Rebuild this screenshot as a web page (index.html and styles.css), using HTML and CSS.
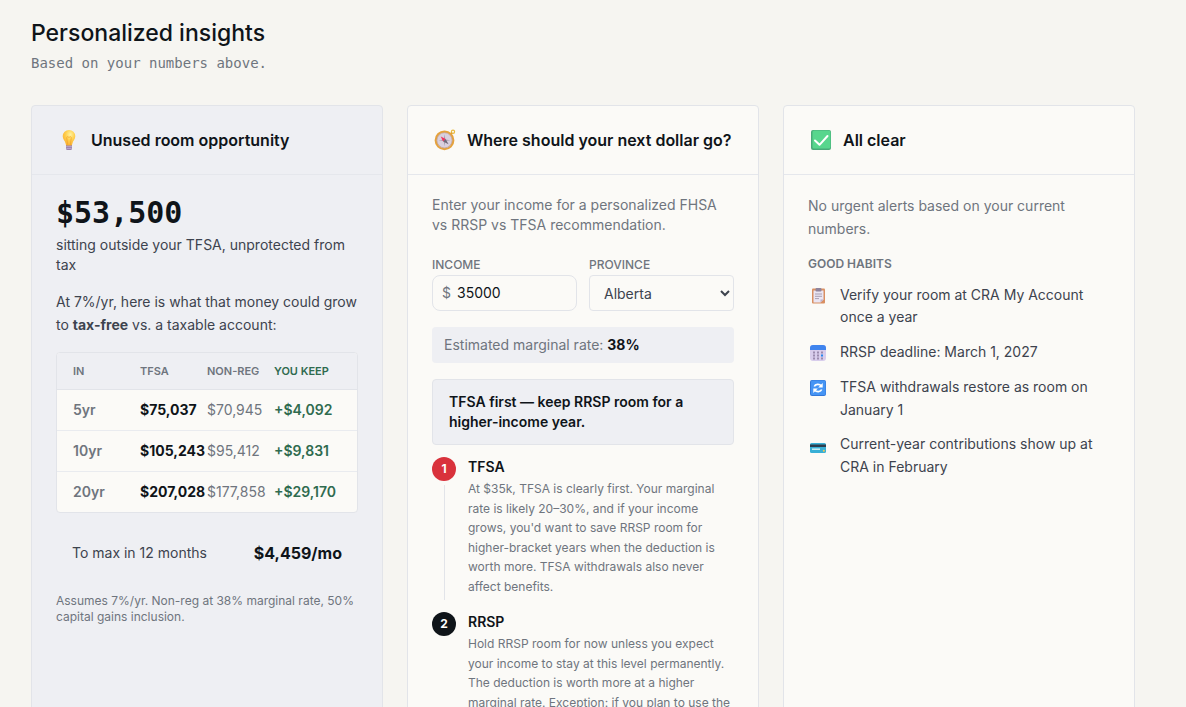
FILE: index.html
```html
<!DOCTYPE html>
<html lang="en">
<head>
    <meta charset="UTF-8">
    <meta name="viewport" content="width=device-width, initial-scale=1.0">
    <title>Personalized insights</title>
    <link rel="stylesheet" href="styles.css">
</head>
<body>
    <main class="insights">
        <header class="insights-header">
            <h1>Personalized insights</h1>
            <p>Based on your numbers above.</p>
        </header>

        <div class="cards">
            <!-- Unused room -->
            <section class="card card-tinted">
                <div class="card-header">
                    <svg class="card-icon" viewBox="0 0 24 24" aria-hidden="true">
                        <defs>
                            <radialGradient id="bulb" cx="0.6" cy="0.3" r="0.7">
                                <stop offset="0" stop-color="#fff3a0"/>
                                <stop offset="0.5" stop-color="#ffd04f"/>
                                <stop offset="1" stop-color="#f9b233"/>
                            </radialGradient>
                        </defs>
                        <path d="M10 17h6v3.500a1.500 1.500 0 0 1-1.500 1.500h-3a1.500 1.500 0 0 1-1.500-1.500z" fill="#9a82ad"/>
                        <path d="M10 18.700h6M10.300 20.500h5.400" stroke="#c9b8d6" stroke-width="0.700"/>
                        <path d="M13 2a6.300 6.300 0 0 0-6.300 6.300c0 3.200 2.300 4.400 2.900 7.200.2 1.200.5 1.900 1.400 1.900h4c.9 0 1.200-.7 1.400-1.900.6-2.800 2.900-4 2.900-7.200A6.300 6.300 0 0 0 13 2z" fill="url(#bulb)"/>
                        <path d="M11.700 17l-.8-6c-.7-2.500 1-3 2.100-1.500 1.100-1.500 2.800-1 2.100 1.500l-.8 6" fill="none" stroke="#f3a52d" stroke-width="0.800"/>
                    </svg>
                    <h2>Unused room opportunity</h2>
                </div>
                <div class="card-body">
                    <div class="amount">$53,500</div>
                    <p class="amount-note">sitting outside your TFSA, unprotected from tax</p>
                    <p class="growth-note">At 7%/yr, here is what that money could grow to <strong>tax-free</strong> vs. a taxable account:</p>
                    <table class="growth">
                        <thead>
                            <tr><th>In</th><th>TFSA</th><th>Non-reg</th><th class="keep">You keep</th></tr>
                        </thead>
                        <tbody>
                            <tr><td class="years">5yr</td><td class="tfsa">$75,037</td><td>$70,945</td><td class="keep">+$4,092</td></tr>
                            <tr><td class="years">10yr</td><td class="tfsa">$105,243</td><td>$95,412</td><td class="keep">+$9,831</td></tr>
                            <tr><td class="years">20yr</td><td class="tfsa">$207,028</td><td>$177,858</td><td class="keep">+$29,170</td></tr>
                        </tbody>
                    </table>
                    <div class="monthly">
                        <span>To max in 12 months</span>
                        <strong>$4,459/mo</strong>
                    </div>
                    <p class="fine-print">Assumes 7%/yr. Non-reg at 38% marginal rate, 50% capital gains inclusion.</p>
                </div>
            </section>

            <!-- Next dollar -->
            <section class="card">
                <div class="card-header">
                    <svg class="card-icon" viewBox="0 0 24 24" aria-hidden="true">
                        <circle cx="21" cy="3.700" r="1.600" fill="none" stroke="#e9b93d" stroke-width="1.200"/>
                        <path d="M18 6.500l2-1.700" stroke="#d99a32" stroke-width="1.600"/>
                        <circle cx="12.500" cy="12.300" r="8.900" fill="#d9d0de" stroke="#e5a23d" stroke-width="2"/>
                        <circle cx="12.500" cy="12.300" r="7.600" fill="none" stroke="#b98a6a" stroke-width="0.500"/>
                        <path d="M12.500 6.300l.8 5.200 5.200.8-5.200.8-.8 5.200-.8-5.200-5.200-.8 5.200-.8z" fill="#a79dad"/>
                        <path d="M8.800 8.600l4.800 2.500-2.500 2.500z" fill="#f4305d"/>
                        <path d="M16.500 16.300l-5.400-2.700 2.500-2.500z" fill="#6f6878"/>
                    </svg>
                    <h2>Where should your next dollar go?</h2>
                </div>
                <div class="card-body">
                    <p class="intro">Enter your income for a personalized FHSA vs RRSP vs TFSA recommendation.</p>
                    <form class="fields">
                        <div class="field">
                            <label for="income">Income</label>
                            <div class="money-input">
                                <span>$</span>
                                <input type="text" id="income" inputmode="numeric" value="35000">
                            </div>
                        </div>
                        <div class="field">
                            <label for="province">Province</label>
                            <select id="province">
                                <option>Alberta</option>
                            </select>
                        </div>
                    </form>
                    <p class="rate">Estimated marginal rate: <strong>38%</strong></p>
                    <p class="verdict">TFSA first — keep RRSP room for a higher-income year.</p>
                    <ol class="steps">
                        <li class="step">
                            <div class="step-marker">
                                <span class="step-number step-first">1</span>
                                <span class="step-line"></span>
                            </div>
                            <div class="step-text">
                                <h3>TFSA</h3>
                                <p>At $35k, TFSA is clearly first. Your marginal rate is likely 20–30%, and if your income grows, you'd want to save RRSP room for higher-bracket years when the deduction is worth more. TFSA withdrawals also never affect benefits.</p>
                            </div>
                        </li>
                        <li class="step">
                            <div class="step-marker">
                                <span class="step-number">2</span>
                            </div>
                            <div class="step-text">
                                <h3>RRSP</h3>
                                <p>Hold RRSP room for now unless you expect your income to stay at this level permanently. The deduction is worth more at a higher marginal rate. Exception: if you plan to use the</p>
                            </div>
                        </li>
                    </ol>
                </div>
            </section>

            <!-- Alerts -->
            <section class="card">
                <div class="card-header">
                    <svg class="card-icon" viewBox="0 0 24 24" aria-hidden="true">
                        <rect x="3" y="2" width="20" height="20" rx="2" fill="#48aa78"/>
                        <rect x="4.500" y="2.500" width="18" height="18" rx="1.500" fill="#57d68d"/>
                        <path d="M7 12.500l4.500 4.300L19.500 8" fill="none" stroke="#fff" stroke-width="2" stroke-linecap="round" stroke-linejoin="round"/>
                    </svg>
                    <h2>All clear</h2>
                </div>
                <div class="card-body">
                    <p class="alerts">No urgent alerts based on your current numbers.</p>
                    <h3 class="habits-title">Good habits</h3>
                    <ul class="habits">
                        <li>
                            <svg viewBox="0 0 20 20" aria-hidden="true">
                                <rect x="4" y="2.500" width="13" height="15" rx="1" fill="#d98f62"/>
                                <path d="M5.500 4.500h10v9l-3 3h-7z" fill="#eae5f3"/>
                                <path d="M12.500 16.500v-3h3z" fill="#bcb0cc"/>
                                <rect x="7.500" y="2" width="6" height="3.500" rx="1" fill="#8f849c"/>
                                <path d="M7 8h7M7 10.300h7M7 12.600h4" stroke="#a89fb3" stroke-width="1"/>
                            </svg>
                            <span>Verify your room at CRA My Account once a year</span>
                        </li>
                        <li>
                            <svg viewBox="0 0 20 20" aria-hidden="true">
                                <rect x="2" y="2" width="16" height="16" rx="3" fill="#d8cdec"/>
                                <path d="M2 7V5a3 3 0 0 1 3-3h10a3 3 0 0 1 3 3v2z" fill="#3f84ee"/>
                                <path d="M5 8.500h2v2H5zM9 8.500h2v2H9zM13 8.500h2v2h-2zM5 11.500h2v2H5zM9 11.500h2v2H9zM5 14.500h2v2H5zM9 14.500h2v2H9zM13 14.500h2v2h-2z" fill="#9b8caf"/>
                                <path d="M13 11.500h2v2h-2z" fill="#2487ee"/>
                            </svg>
                            <span>RRSP deadline: March 1, 2027</span>
                        </li>
                        <li>
                            <svg viewBox="0 0 20 20" aria-hidden="true">
                                <rect x="2" y="2" width="16" height="16" rx="2" fill="#3277d8"/>
                                <rect x="3" y="2.500" width="14.500" height="14.500" rx="1.500" fill="#4594f4"/>
                                <path d="M6.300 8.500c1-2.500 5-3 7.200-.5M13.700 11.500c-1 2.500-5 3-7.200.5" fill="none" stroke="#fff" stroke-width="1.700"/>
                                <path d="M14.700 5v4.500h-4.500zM5.300 15v-4.500h4.500z" fill="#fff"/>
                            </svg>
                            <span>TFSA withdrawals restore as room on January 1</span>
                        </li>
                        <li>
                            <svg viewBox="0 0 20 20" aria-hidden="true">
                                <rect x="2" y="8" width="16" height="10" rx="1.500" fill="#38afd6"/>
                                <path d="M2 9.500h16V12H2z" fill="#2d3c4d"/>
                                <path d="M4 14.200h8" stroke="#d8f2f5" stroke-width="1.400"/>
                                <circle cx="15.800" cy="15.800" r="1" fill="#f6c94c"/>
                            </svg>
                            <span>Current-year contributions show up at CRA in February</span>
                        </li>
                    </ul>
                </div>
            </section>
        </div>
    </main>
</body>
</html>
```

FILE: styles.css
```css
* {
    box-sizing: border-box;
}
body {
    margin: 0;
    font-family: Inter, sans-serif;
    font-size: 14px;
    line-height: 20px;
    color: #3d434e;
    background: #f6f5f1;
}
h1, h2, h3, p, ul, ol {
    margin: 0;
    padding: 0;
}
ul, ol {
    list-style: none;
}
.insights {
    padding: 17px 51px 32px 31px;
}
.insights-header {
    margin-bottom: 32px;
}
.insights-header h1 {
    font-size: 23px;
    line-height: 32px;
    font-weight: 500;
    color: #0f1419;
    margin-bottom: 4px;
}
.insights-header p {
    font-family: "DejaVu Sans Mono", monospace;
    color: #6f757e;
}

/* Cards */
.cards {
    display: grid;
    grid-template-columns: repeat(3, 1fr);
    gap: 24px;
}
.card {
    background: #fbfaf7;
    border: 1px solid #e2e4e9;
    border-radius: 4px;
}
.card-tinted {
    background: #eeeff3;
}
.card-header {
    display: flex;
    align-items: center;
    gap: 11px;
    padding: 24px;
    border-bottom: 1px solid #e5e7ec;
}
.card-header h2 {
    font-size: 16px;
    line-height: 20px;
    font-weight: 600;
    color: #0f1419;
    white-space: nowrap;
}
.card-icon {
    width: 24px;
    height: 24px;
    margin: -2px 0;
    flex-shrink: 0;
}
.card-body {
    padding: 20px 24px 24px;
}

/* Unused room */
.amount {
    font-family: "DejaVu Sans Mono", monospace;
    font-size: 30px;
    line-height: 36px;
    font-weight: 700;
    color: #0f1419;
    margin-bottom: 4px;
}
.amount-note {
    margin-bottom: 16px;
}
.growth-note {
    line-height: 1.625;
    margin-bottom: 15px;
}
.growth {
    display: block;
    background: #fbfaf7;
    border: 1px solid #e2e4e9;
    border-radius: 4px;
    overflow: hidden;
}
.growth thead, .growth tbody {
    display: block;
}
.growth tr {
    display: grid;
    grid-template-columns: repeat(4, minmax(0, 1fr));
    padding: 10px 16px;
    border-bottom: 1px solid #e9ebef;
}
.growth tbody tr:last-child {
    border-bottom: none;
}
.growth thead tr {
    background: #eeeff3;
    border-color: #e2e4e9;
}
.growth th, .growth td {
    padding: 0;
    text-align: left;
    white-space: nowrap;
}
.growth th {
    font-size: 11px;
    line-height: 16px;
    font-weight: 600;
    text-transform: uppercase;
    color: #6f757e;
}
.growth td {
    color: #6f757e;
}
.growth .years {
    font-weight: 600;
}
.growth .tfsa {
    font-weight: 700;
    color: #0f1419;
}
.growth .keep {
    font-weight: 600;
    color: #2f6b4f;
}
.monthly {
    display: flex;
    justify-content: space-between;
    align-items: center;
    padding: 12px 16px;
    margin: 16px 0;
}
.monthly strong {
    font-size: 16px;
    line-height: 24px;
    color: #0f1419;
}
.fine-print {
    font-size: 12px;
    line-height: 16px;
    color: #6f757e;
}

/* Next dollar */
.intro {
    color: #6f757e;
    margin-bottom: 20px;
}
.fields {
    display: grid;
    grid-template-columns: 1fr 1fr;
    gap: 12px;
    margin-bottom: 16px;
}
.field label {
    display: block;
    font-size: 12px;
    line-height: 20px;
    font-weight: 500;
    text-transform: uppercase;
    color: #6f757e;
}
.money-input {
    display: flex;
    align-items: center;
    gap: 6px;
    height: 36px;
    padding: 0 9px;
    border: 1px solid #e2e4e9;
    border-radius: 8px;
    color: #6f757e;
}
.money-input input {
    width: 100%;
    min-width: 0;
    padding: 0;
    border: none;
    outline: none;
    background: transparent;
    font: inherit;
    color: #0f1419;
}
.field select {
    display: block;
    width: 100%;
    height: 36px;
    padding: 0 0 0 10px;
    border: 1px solid #e2e4e9;
    border-radius: 4px;
    background: #fbfaf7;
    font: inherit;
    color: #3d434e;
}
.rate {
    padding: 8px 12px;
    margin-bottom: 16px;
    border-radius: 4px;
    background: #eeeff3;
    color: #6f757e;
}
.rate strong {
    color: #0f1419;
}
.verdict {
    padding: 12px 16px;
    margin-bottom: 12px;
    border: 1px solid #e2e4e9;
    border-radius: 4px;
    background: #eeeff3;
    font-weight: 600;
    color: #0f1419;
}
.steps {
    display: flex;
    flex-direction: column;
    gap: 12px;
}
.step {
    display: flex;
    gap: 12px;
}
.step-marker {
    display: flex;
    flex-direction: column;
    align-items: center;
    gap: 4px;
}
.step-number {
    width: 24px;
    height: 24px;
    border-radius: 50%;
    background: #0f1419;
    color: #ffffff;
    font-size: 12px;
    line-height: 24px;
    font-weight: 700;
    text-align: center;
}
.step-first {
    background: #d9323c;
}
.step-line {
    flex: 1;
    width: 1px;
    background: #e2e4e9;
}
.step-text {
    flex: 1;
    padding-bottom: 4px;
}
.step-text h3 {
    font-size: 14px;
    line-height: 20px;
    font-weight: 600;
    color: #0f1419;
    margin-bottom: 2px;
}
.step-text p {
    font-size: 12px;
    line-height: 1.625;
    color: #6f757e;
}

/* Alerts */
.alerts {
    line-height: 1.625;
    color: #6f757e;
    margin-bottom: 15px;
}
.habits-title {
    font-size: 12px;
    line-height: 16px;
    font-weight: 600;
    text-transform: uppercase;
    color: #6f757e;
    margin-bottom: 12px;
}
.habits {
    display: flex;
    flex-direction: column;
    gap: 12px;
}
.habits li {
    display: flex;
    gap: 12px;
    line-height: 1.625;
}
.habits svg {
    width: 20px;
    height: 20px;
    margin-top: 2px;
    flex-shrink: 0;
}
```
